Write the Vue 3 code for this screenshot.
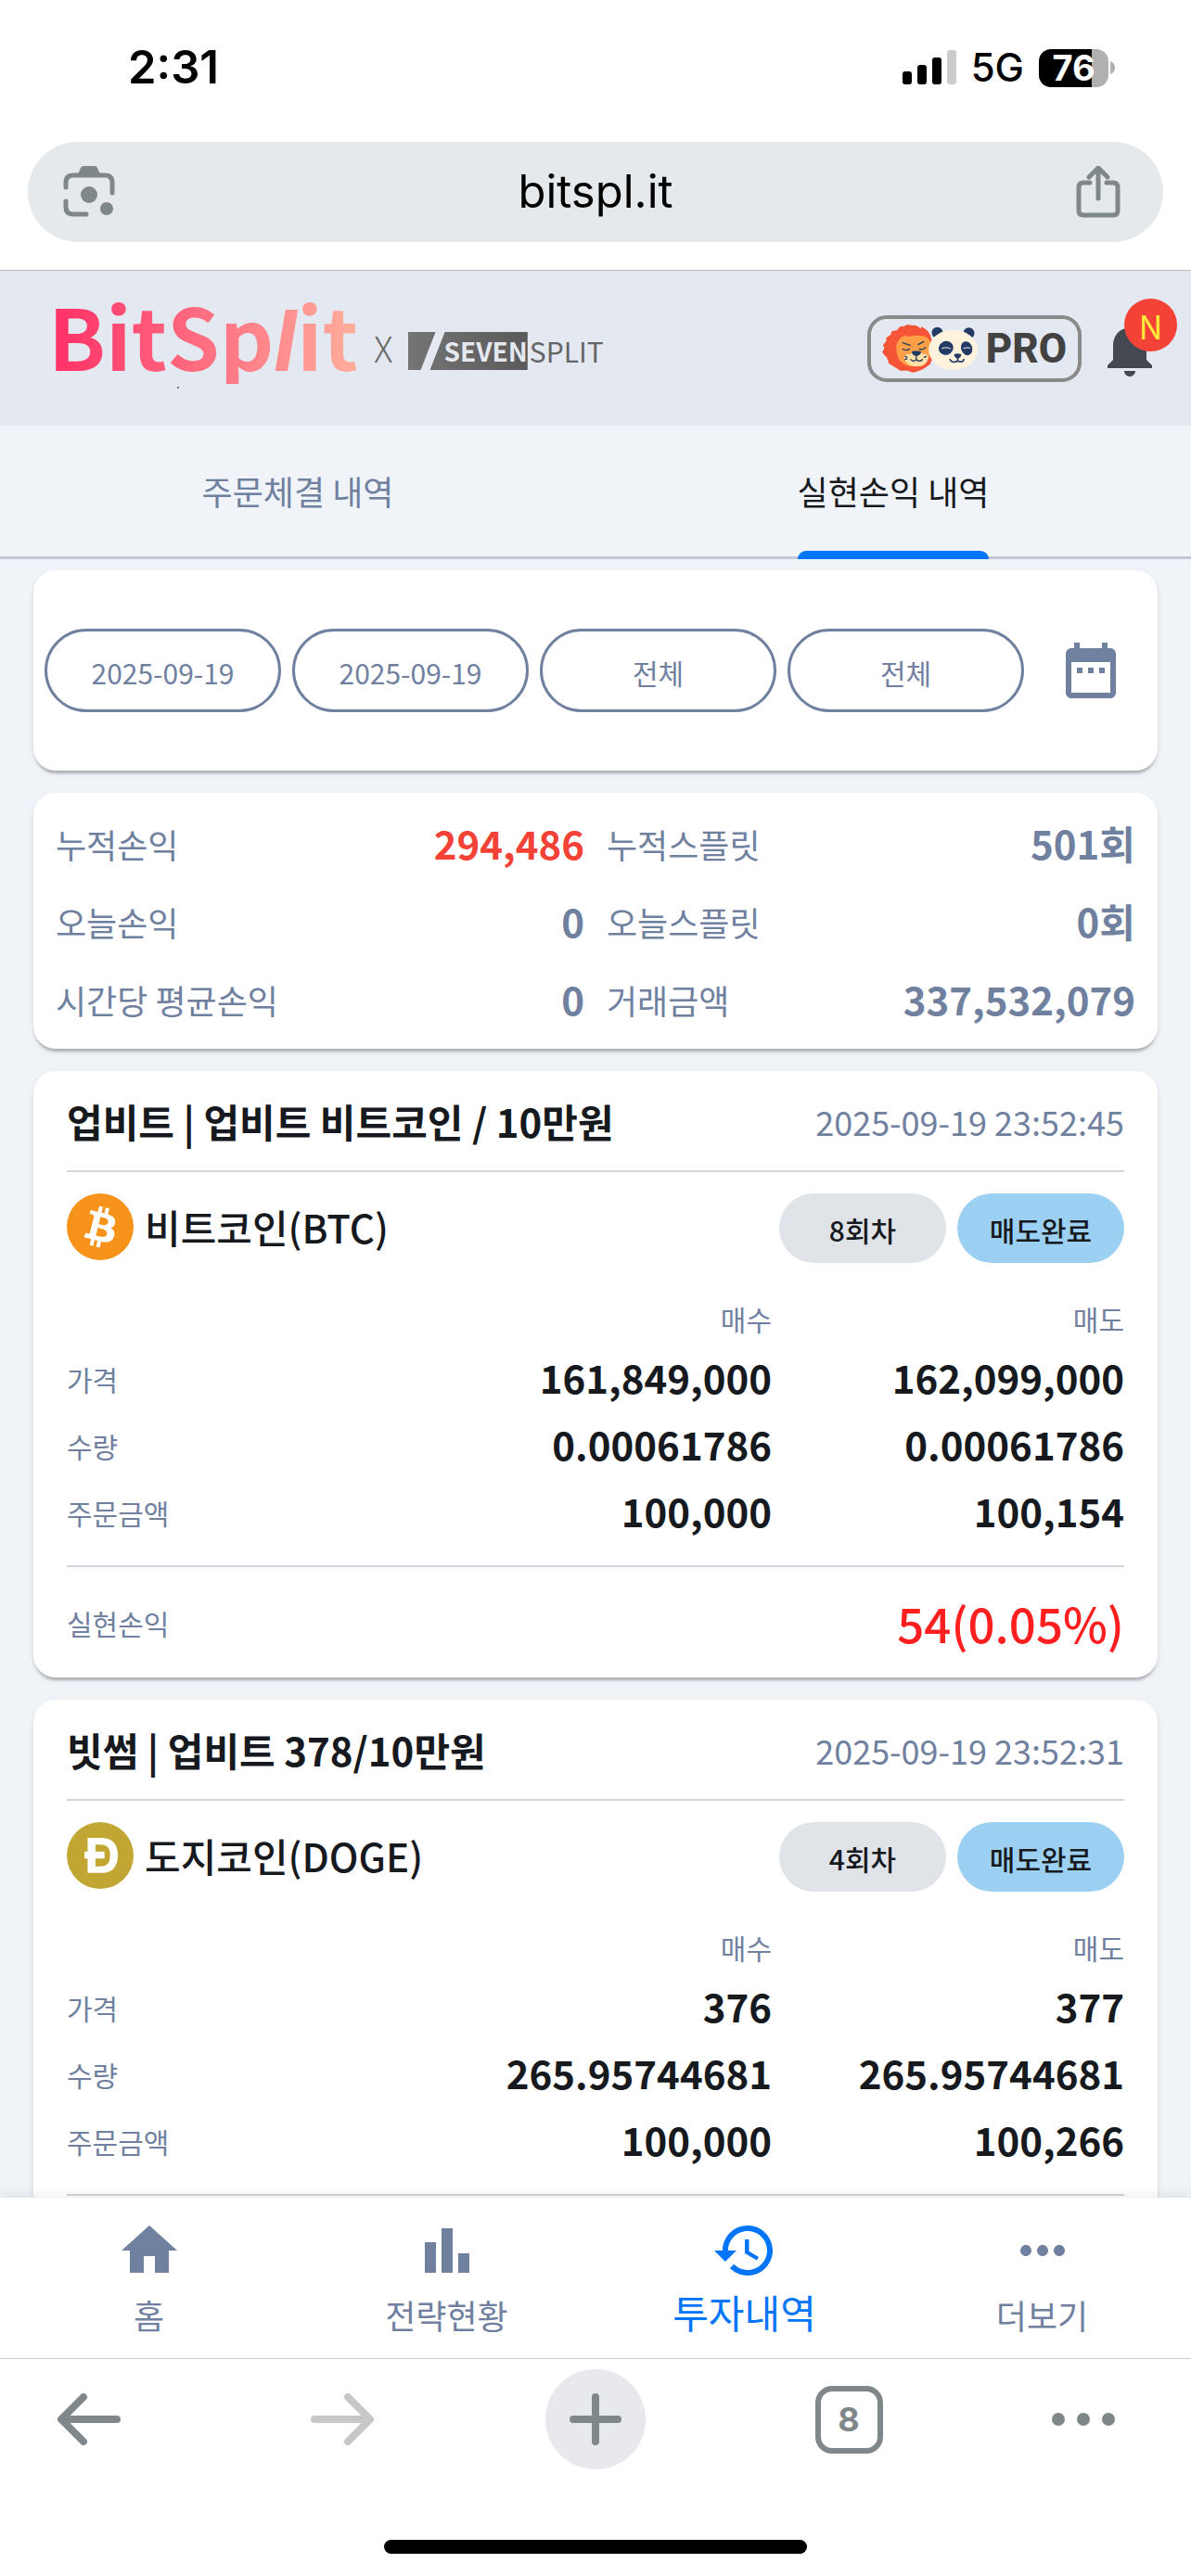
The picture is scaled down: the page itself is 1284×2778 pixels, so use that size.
<template>
  <div class="screen">
    <div class="status-bar">
      <span class="clock">2:31</span>
      <div class="status-icons">
        <svg width="58" height="38" viewBox="0 0 58 38">
          <rect x="0" y="23" width="10" height="14" rx="3" />
          <rect x="16" y="16" width="10" height="21" rx="3" />
          <rect x="32" y="8" width="10" height="29" rx="3" />
          <rect x="48" y="0" width="10" height="37" rx="3" fill="#ccc" />
        </svg>
        <span class="network">5G</span>
        <div class="battery">
          <span class="battery-body">76</span>
          <svg width="5" height="14" viewBox="0 0 5 14"><path d="M0 0q5 2 5 7t-5 7z" fill="#b0b0b0" /></svg>
        </div>
      </div>
    </div>

    <div class="url-row">
      <div class="url-bar">
        <button class="icon-btn" aria-label="렌즈">
          <svg width="56" height="56" viewBox="0 0 56 56" fill="none">
            <g stroke="#80878a" stroke-width="5" stroke-linecap="round">
              <path d="M3 23v-5q0-8 8-8h34q8 0 8 8v11" />
              <path d="M3 38v6q0 8 8 8h14" />
            </g>
            <path d="M15 11L19 2q1-2 3-2h12q2 0 3 2l4 9z" fill="#80878a" />
            <circle cx="28" cy="31" r="9" fill="#80878a" />
            <circle cx="47" cy="46" r="7" fill="#80878a" />
          </svg>
        </button>
        <span class="url">bitspl.it</span>
        <button class="icon-btn" aria-label="공유">
          <svg width="48" height="56" viewBox="0 0 48 56" fill="none" stroke="#80878a" stroke-width="5" stroke-linecap="round" stroke-linejoin="round">
            <path d="M15 18H8q-5 0-5 5v25q0 5 5 5h32q5 0 5-5V23q0-5-5-5h-7" />
            <path d="M24 35V3M14 12L24 2l10 10" />
          </svg>
        </button>
      </div>
    </div>

    <header class="app-header">
      <div class="brand">
        <span class="logo">BitSp<i>l</i>it</span>
        <span class="times">X</span>
        <span class="partner"><b class="seven">SEVEN</b><span>SPLIT</span></span>
      </div>
      <div class="header-actions">
        <button class="pro-btn">
          <svg width="105" height="54" viewBox="207 176 314 162">
            <path d="M210 268l7-14-5-8 11-14 0-10 14-10 4-12 16-2 10-12 14-2 10-5 14 2 14 1 16 10 2-7 18 13 10 14 6 20 0 60-7 16-20 14-22 9-14 3-16-6-24 0-16-10-20-12-8-22-5-4z" fill="#f55536" />
            <path d="M255 250q4-27 27-36l13 4q28-7 52-1 14 5 19 20 6 30-8 52-14 26-44 26-30 0-48-20-11-20-11-45z" fill="#ff9f47" />
            <path d="M281 286q2-13 20-12 10-10 20-10t20 10q16-2 18 12-4 28-38 29-34-1-40-29z" fill="#ffe1a8" />
            <path d="M305 267q16-7 31 0-2 13-16 14-13-1-15-14z" fill="#1f3a5f" />
            <path d="M276 238l24 8M326 244l18-10M276 258q10 8 22 0M330 258q11 5 20-5M320 280v12M302 292q9 10 18 0 10 10 20 0M284 282l6 3M284 292l6-2M352 282l-6 3" fill="none" stroke="#1f3a5f" stroke-width="4" stroke-linecap="round" />
            <circle cx="388" cy="205" r="18" fill="#233a64" />
            <circle cx="490" cy="207" r="18" fill="#233a64" />
            <ellipse cx="439" cy="261" rx="79" ry="65" fill="#fff3dd" />
            <ellipse cx="416" cy="255" rx="24" ry="22" transform="rotate(-30 416 255)" fill="#233a64" />
            <ellipse cx="483" cy="256" rx="18" ry="23" transform="rotate(-20 483 256)" fill="#233a64" />
            <path d="M404 256q12-5 26 1M474 256q10-4 19-1" fill="none" stroke="#c9cbd0" stroke-width="4" stroke-linecap="round" />
            <path d="M442 276q12-7 24 0-2 12-12 13-10-1-12-13z" fill="#233a64" />
            <path d="M454 286v8M429 292q6 14 25 5 16 7 20-5" fill="none" stroke="#233a64" stroke-width="5" stroke-linecap="round" />
          </svg>
          PRO
        </button>
        <button class="bell-btn" aria-label="알림">
          <svg width="72" height="72" viewBox="0 0 24 24" fill="#434851">
            <path d="M12 22c1.1 0 2-.9 2-2h-4c0 1.1.89 2 2 2zm6-6v-5c0-3.07-1.64-5.64-4.5-6.32V4c0-.83-.67-1.5-1.5-1.5s-1.5.67-1.5 1.5v.68C7.63 5.36 6 7.92 6 11v5l-2 2v1h16v-1l-2-2z" />
          </svg>
          <span class="badge">N</span>
        </button>
      </div>
    </header>

    <div class="tabs" role="tablist">
      <button
        v-for="(tab, i) in tabs"
        :key="tab"
        class="tab"
        :class="{ active: i === activeTab }"
        role="tab"
        :aria-selected="i === activeTab"
        @click="activeTab = i"
      >
        <span>{{ tab }}</span>
      </button>
    </div>

    <main class="content">
      <section class="card filter-card">
        <button v-for="(f, i) in filters" :key="i" class="filter-btn">{{ f }}</button>
        <button class="calendar-btn" aria-label="기간 선택">
          <svg width="72" height="72" viewBox="0 0 24 24" fill="#70809f">
            <path d="M9 11H7v2h2v-2zm4 0h-2v2h2v-2zm4 0h-2v2h2v-2zm2-7h-1V2h-2v2H8V2H6v2H5c-1.11 0-1.99.9-1.99 2L3 20c0 1.1.89 2 2 2h14c1.1 0 2-.9 2-2V6c0-1.1-.9-2-2-2zm0 16H5V9h14v11z" />
          </svg>
        </button>
      </section>

      <dl class="card summary-card">
        <div v-for="item in summary" :key="item.label" class="summary-item">
          <dt>{{ item.label }}</dt>
          <dd :class="{ up: item.up }">{{ item.value }}</dd>
        </div>
      </dl>

      <article v-for="trade in trades" :key="trade.time" class="card trade-card">
        <div class="trade-head">
          <h2>{{ trade.title }}</h2>
          <time>{{ trade.time }}</time>
        </div>
        <div class="trade-coin">
          <svg width="72" height="72" viewBox="0 0 32 32">
            <circle cx="16" cy="16" r="16" :fill="trade.color" />
            <path :d="coinPaths[trade.symbol]" fill="#fff" stroke="#fff" :stroke-width="trade.symbol === 'DOGE' ? 1 : 0" />
          </svg>
          <span class="coin-name">{{ trade.coin }}({{ trade.symbol }})</span>
          <span class="chip">{{ trade.round }}</span>
          <span class="chip done">매도완료</span>
        </div>
        <table class="trade-table">
          <thead>
            <tr>
              <td></td>
              <th>매수</th>
              <th>매도</th>
            </tr>
          </thead>
          <tbody>
            <tr v-for="row in trade.rows" :key="row[0]">
              <th>{{ row[0] }}</th>
              <td>{{ row[1] }}</td>
              <td>{{ row[2] }}</td>
            </tr>
          </tbody>
        </table>
        <div class="trade-profit">
          <template v-if="trade.profit">
            <span>실현손익</span>
            <strong>{{ trade.profit }}</strong>
          </template>
        </div>
      </article>
    </main>

    <nav class="bottom-nav">
      <a
        v-for="item in navItems"
        :key="item.label"
        href="#"
        class="nav-item"
        :class="{ active: item.active }"
      >
        <svg width="72" height="72" viewBox="0 0 24 24" fill="currentColor"><path :d="item.icon" /></svg>
        <span>{{ item.label }}</span>
      </a>
    </nav>

    <footer class="browser-bar">
      <div class="browser-tools">
        <button class="tool" aria-label="뒤로">
          <svg width="68" height="56" viewBox="0 0 68 56" fill="none" stroke="#80878a" stroke-width="8" stroke-linecap="round" stroke-linejoin="round">
            <path d="M64 28H5M28 4L4 28l24 24" />
          </svg>
        </button>
        <button class="tool" aria-label="앞으로" disabled>
          <svg width="68" height="56" viewBox="0 0 68 56" fill="none" stroke="#c7c7c7" stroke-width="8" stroke-linecap="round" stroke-linejoin="round">
            <path d="M4 28h59M40 4l24 24-24 24" />
          </svg>
        </button>
        <button class="tool plus" aria-label="새 탭">
          <svg width="56" height="56" viewBox="0 0 56 56" fill="none" stroke="#80878a" stroke-width="8" stroke-linecap="round">
            <path d="M28 4v48M4 28h48" />
          </svg>
        </button>
        <button class="tool"><span class="tab-count">8</span></button>
        <button class="tool more" aria-label="메뉴">
          <svg width="68" height="14" viewBox="0 0 68 14" fill="#80878a">
            <circle cx="7" cy="7" r="7" />
            <circle cx="34" cy="7" r="7" />
            <circle cx="61" cy="7" r="7" />
          </svg>
        </button>
      </div>
      <div class="home-indicator"></div>
    </footer>
  </div>
</template>

<script setup>
import { ref } from 'vue'

const tabs = ['주문체결 내역', '실현손익 내역']
const activeTab = ref(1)

const filters = ['2025-09-19', '2025-09-19', '전체', '전체']

const summary = [
  { label: '누적손익', value: '294,486', up: true },
  { label: '누적스플릿', value: '501회' },
  { label: '오늘손익', value: '0' },
  { label: '오늘스플릿', value: '0회' },
  { label: '시간당 평균손익', value: '0' },
  { label: '거래금액', value: '337,532,079' },
]

const trades = [
  {
    title: '업비트 | 업비트 비트코인 / 10만원',
    time: '2025-09-19 23:52:45',
    coin: '비트코인',
    symbol: 'BTC',
    color: '#f7931a',
    round: '8회차',
    rows: [
      ['가격', '161,849,000', '162,099,000'],
      ['수량', '0.00061786', '0.00061786'],
      ['주문금액', '100,000', '100,154'],
    ],
    profit: '54(0.05%)',
  },
  {
    title: '빗썸 | 업비트 378/10만원',
    time: '2025-09-19 23:52:31',
    coin: '도지코인',
    symbol: 'DOGE',
    color: '#c2a633',
    round: '4회차',
    rows: [
      ['가격', '376', '377'],
      ['수량', '265.95744681', '265.95744681'],
      ['주문금액', '100,000', '100,266'],
    ],
  },
]

const coinPaths = {
  BTC: 'M23.189 14.02c.314-2.096-1.283-3.223-3.465-3.975l.708-2.84-1.728-.43-.69 2.765c-.454-.114-.92-.22-1.385-.326l.695-2.783L15.596 6l-.708 2.839c-.376-.086-.746-.17-1.104-.26l.002-.009-2.384-.595-.46 1.846s1.283.294 1.256.312c.7.175.826.638.805 1.006l-.806 3.235c.048.012.11.03.18.057l-.183-.045-1.13 4.532c-.086.212-.303.531-.793.41.018.025-1.256-.313-1.256-.313l-.858 1.978 2.25.561c.418.105.828.215 1.231.318l-.715 2.872 1.727.43.708-2.84c.472.127.93.245 1.378.357l-.706 2.828 1.728.43.715-2.866c2.948.558 5.164.333 6.097-2.333.752-2.146-.037-3.385-1.588-4.192 1.13-.26 1.98-1.003 2.207-2.538zm-3.95 5.538c-.533 2.147-4.148.986-5.32.695l.95-3.805c1.172.293 4.929.872 4.37 3.11zm.535-5.569c-.487 1.953-3.495.96-4.47.717l.86-3.45c.975.243 4.118.696 3.61 2.733z',
  DOGE: 'M13.248 14.61h4.314v2.286h-4.314v4.818h2.721c1.077 0 1.958-.145 2.644-.437.686-.291 1.224-.694 1.615-1.21a4.4 4.4 0 00.796-1.815 11.4 11.4 0 00.22-2.252 11.4 11.4 0 00-.22-2.252 4.396 4.396 0 00-.796-1.815c-.391-.516-.93-.919-1.615-1.21-.686-.292-1.567-.437-2.644-.437h-2.721v4.325zm-2.766 2.286H9v-2.285h1.482V8h6.549c1.21 0 2.257.21 3.142.627.885.419 1.607.99 2.168 1.715.56.724.977 1.572 1.25 2.543.273.971.409 1.99.409 3.056 0 1.079-.14 2.1-.41 3.06-.272.972-.689 1.82-1.249 2.543-.56.725-1.283 1.297-2.168 1.715-.885.418-1.933.627-3.142.627h-6.549v-6.99z',
}

const navItems = [
  { label: '홈', icon: 'M10 20v-6h4v6h5v-8h3L12 3 2 12h3v8z' },
  { label: '전략현황', icon: 'M10 20h4V4h-4v16zm-6 0h4V9H4v11zm12-7v7h4v-7h-4z' },
  {
    label: '투자내역',
    icon: 'M13 3c-4.97 0-9 4.03-9 9H1l3.89 3.89.07.14L9 12H6c0-3.87 3.13-7 7-7s7 3.13 7 7-3.13 7-7 7c-1.93 0-3.68-.79-4.94-2.06l-1.42 1.42C8.27 19.99 10.51 21 13 21c4.97 0 9-4.03 9-9s-4.03-9-9-9zm-1 5v5l4.28 2.54.72-1.21-3.5-2.08V8H12z',
    active: true,
  },
  {
    label: '더보기',
    icon: 'M6 10c-1.1 0-2 .9-2 2s.9 2 2 2 2-.9 2-2-.9-2-2-2zm12 0c-1.1 0-2 .9-2 2s.9 2 2 2 2-.9 2-2-.9-2-2-2zm-6 0c-1.1 0-2 .9-2 2s.9 2 2 2 2-.9 2-2-.9-2-2-2z',
  },
]
</script>

<style>
body {
  margin: 0;
}
</style>

<style scoped>
.screen {
  display: flex;
  flex-direction: column;
  height: 100vh;
  background: #f0f3f8;
  font-family: 'Noto Sans CJK KR', sans-serif;
  color: #16191d;
}

.screen * {
  box-sizing: border-box;
}

button {
  border: none;
  background: none;
  padding: 0;
  margin: 0;
  font-family: inherit;
  color: inherit;
  cursor: pointer;
}

svg {
  display: block;
  flex-shrink: 0;
}

/* status bar */
.status-bar {
  display: flex;
  align-items: center;
  justify-content: space-between;
  padding: 43px 82px 50px 138px;
  background: #fff;
  font-family: Inter, sans-serif;
  color: #000;
}

.clock {
  font-size: 49px;
  font-weight: 600;
  line-height: 60px;
}

.status-icons {
  display: flex;
  align-items: center;
  gap: 16px;
}

.network {
  font-size: 42px;
  font-weight: 500;
  line-height: 60px;
}

.battery {
  display: flex;
  align-items: center;
  gap: 2px;
}

.battery-body {
  width: 75px;
  border-radius: 13px;
  background: linear-gradient(90deg, #000 76%, #b0b0b0 76%);
  color: #fff;
  font-size: 38px;
  font-weight: 700;
  line-height: 41px;
  text-align: center;
}

/* address bar */
.url-row {
  padding: 0 30px 30px;
  background: #fff;
}

.url-bar {
  display: flex;
  align-items: center;
  justify-content: space-between;
  padding: 24px 46px 24px 38px;
  border-radius: 54px;
  background: #e5e9ec;
  font-family: Inter, sans-serif;
}

.url {
  font-size: 49px;
  line-height: 60px;
  color: #000;
}

/* header */
.app-header {
  display: flex;
  align-items: center;
  justify-content: space-between;
  flex-shrink: 0;
  padding: 14px 30px 14px 52px;
  border-top: 1px solid #b4bbbf;
  background: #e4e8f0;
}

.brand {
  position: relative;
  display: flex;
  align-items: flex-end;
  padding-bottom: 31px;
}

.brand::after {
  content: '';
  position: absolute;
  left: 139px;
  bottom: 26px;
  width: 2px;
  height: 2px;
  background: #777;
}

.logo {
  font-size: 91px;
  font-weight: 700;
  line-height: 108px;
  background: linear-gradient(90deg, #ff2e66, #ffae9c);
  -webkit-background-clip: text;
  background-clip: text;
  color: transparent;
}

.logo i {
  font-family: Inter, sans-serif;
  line-height: 1;
}

.times {
  margin: 0 16px 15px 17px;
  font-size: 38px;
  font-weight: 300;
  line-height: 48px;
  color: #6a6a6a;
}

.partner {
  display: flex;
  margin-bottom: 15px;
  font-size: 30px;
  line-height: 41px;
  color: #666;
}

.seven {
  padding-left: 39px;
  margin-right: 2px;
  background: linear-gradient(90deg, #757575, #5a5a5a);
  clip-path: polygon(0 0, 30px 0, 14px 100%, 24px 100%, 40px 0, 100% 0, 100% 100%, 0 100%);
  font-size: 28px;
  color: #e4e8f0;
}

.header-actions {
  display: flex;
  align-items: center;
  gap: 16px;
}

.pro-btn {
  display: flex;
  align-items: center;
  gap: 8px;
  height: 72px;
  padding: 0 12px 0 11px;
  border: 4px solid #8a8a8a;
  border-radius: 21px;
  font-family: Roboto, sans-serif;
  font-size: 44px;
  font-weight: 800;
  color: #424242;
}

.bell-btn {
  position: relative;
}

.badge {
  position: absolute;
  top: -18px;
  right: -15px;
  width: 57px;
  height: 57px;
  border-radius: 50%;
  background: #f44336;
  color: #ffeb3b;
  font-size: 36px;
  line-height: 57px;
}

/* tabs */
.tabs {
  display: flex;
  flex-shrink: 0;
  border-bottom: 3px solid #c2c8d3;
}

.tab {
  display: flex;
  flex: 1;
  justify-content: center;
  margin-bottom: -3px;
  font-size: 36px;
  line-height: 140px;
  color: #70809f;
}

.tab span {
  padding-bottom: 4px;
}

.tab.active {
  color: #16191d;
}

.tab.active span {
  position: relative;
}

.tab.active span::after {
  content: '';
  position: absolute;
  left: 0;
  right: 0;
  bottom: 0;
  height: 9px;
  border-radius: 9px 9px 0 0;
  background: #0075f7;
}

/* content */
.content {
  display: flex;
  flex: 1;
  flex-direction: column;
  gap: 24px;
  min-height: 0;
  padding: 12px 36px 24px;
  overflow-y: auto;
  scrollbar-width: none;
}

.card {
  flex-shrink: 0;
  margin: 0;
  border-radius: 24px;
  background: #fff;
  box-shadow: 0 6px 3px -3px rgba(0, 0, 0, 0.16), 0 3px 3px rgba(0, 0, 0, 0.1), 0 3px 9px rgba(0, 0, 0, 0.06);
}

.filter-card {
  display: flex;
  align-items: center;
  gap: 12px;
  padding: 63px 12px;
}

.filter-btn {
  flex: 1;
  height: 90px;
  padding-top: 4px;
  border: 3px solid #70809f;
  border-radius: 45px;
  font-size: 30px;
  color: #70809f;
}

.calendar-btn {
  padding: 0 24px;
}

.summary-card {
  display: grid;
  grid-template-columns: 1fr 1fr;
  column-gap: 24px;
  padding: 12px 24px;
}

.summary-item {
  display: flex;
  align-items: center;
  justify-content: space-between;
  color: #70809f;
}

.summary-item dt {
  padding-top: 2px;
  font-size: 36px;
  line-height: 82px;
}

.summary-item dd {
  margin: 0;
  font-size: 42px;
  font-weight: 700;
  line-height: 84px;
}

.summary-item dd.up {
  color: #f44336;
}

.trade-card {
  padding: 24px 36px 0;
}

.trade-head {
  display: flex;
  align-items: center;
  justify-content: space-between;
  padding-bottom: 23px;
  border-bottom: 2px solid #d0d4dd;
  line-height: 60px;
}

.trade-head h2 {
  margin: 0;
  font-size: 42px;
  font-weight: 700;
}

.trade-head time {
  font-size: 36px;
  color: #70809f;
}

.trade-coin {
  display: flex;
  align-items: flex-start;
  gap: 12px;
  padding: 23px 0 33px;
}

.coin-name {
  flex: 1;
  font-size: 42px;
  font-weight: 500;
  line-height: 72px;
}

.chip {
  width: 180px;
  padding-top: 4px;
  border-radius: 38px;
  background: #e0e3e8;
  font-size: 30px;
  font-weight: 500;
  line-height: 71px;
  text-align: center;
}

.chip.done {
  background: #9bd0f2;
}

.trade-table {
  width: 100%;
  table-layout: fixed;
  border-collapse: collapse;
}

.trade-table th,
.trade-table td {
  padding: 0;
  text-align: right;
}

.trade-table th {
  font-size: 30px;
  font-weight: 400;
  line-height: 54px;
  color: #70809f;
}

.trade-table tbody th {
  padding-top: 4px;
  text-align: left;
}

.trade-table tbody td {
  font-size: 42px;
  font-weight: 700;
  line-height: 72px;
}

.trade-profit {
  display: flex;
  align-items: center;
  justify-content: space-between;
  min-height: 121px;
  margin-top: 23px;
  border-top: 2px solid #d0d4dd;
  font-size: 30px;
  color: #70809f;
}

.trade-profit strong {
  font-size: 51px;
  font-weight: 500;
  line-height: 72px;
  color: #ff1f1f;
}

/* bottom navigation */
.bottom-nav {
  display: flex;
  flex-shrink: 0;
  padding: 21px 0 14px;
  background: #fff;
  box-shadow: 0 -3px 12px rgba(0, 0, 0, 0.08);
  z-index: 1;
}

.nav-item {
  display: flex;
  flex: 1;
  flex-direction: column;
  align-items: center;
  font-size: 36px;
  line-height: 66px;
  color: #70809f;
  text-decoration: none;
}

.nav-item.active {
  font-size: 42px;
  line-height: 60px;
  color: #0075f7;
}

/* browser toolbar */
.browser-bar {
  flex-shrink: 0;
  z-index: 1;
  padding: 11px 42px 24px;
  border-top: 1px solid #ccc;
  background: #fff;
}

.browser-tools {
  display: flex;
  justify-content: space-between;
}

.tool {
  display: flex;
  align-items: center;
  justify-content: center;
  width: 108px;
  height: 108px;
}

.tool.plus {
  border-radius: 50%;
  background: #e8e9ed;
}

.tool.more {
  justify-content: flex-start;
}

.tab-count {
  width: 73px;
  border: 6px solid #80878a;
  border-radius: 18px;
  font-family: Inter, sans-serif;
  font-size: 36px;
  font-weight: 700;
  line-height: 61px;
  color: #80878a;
}

.home-indicator {
  width: 38%;
  height: 15px;
  margin: 76px auto 0;
  border-radius: 8px;
  background: #000;
}
</style>
